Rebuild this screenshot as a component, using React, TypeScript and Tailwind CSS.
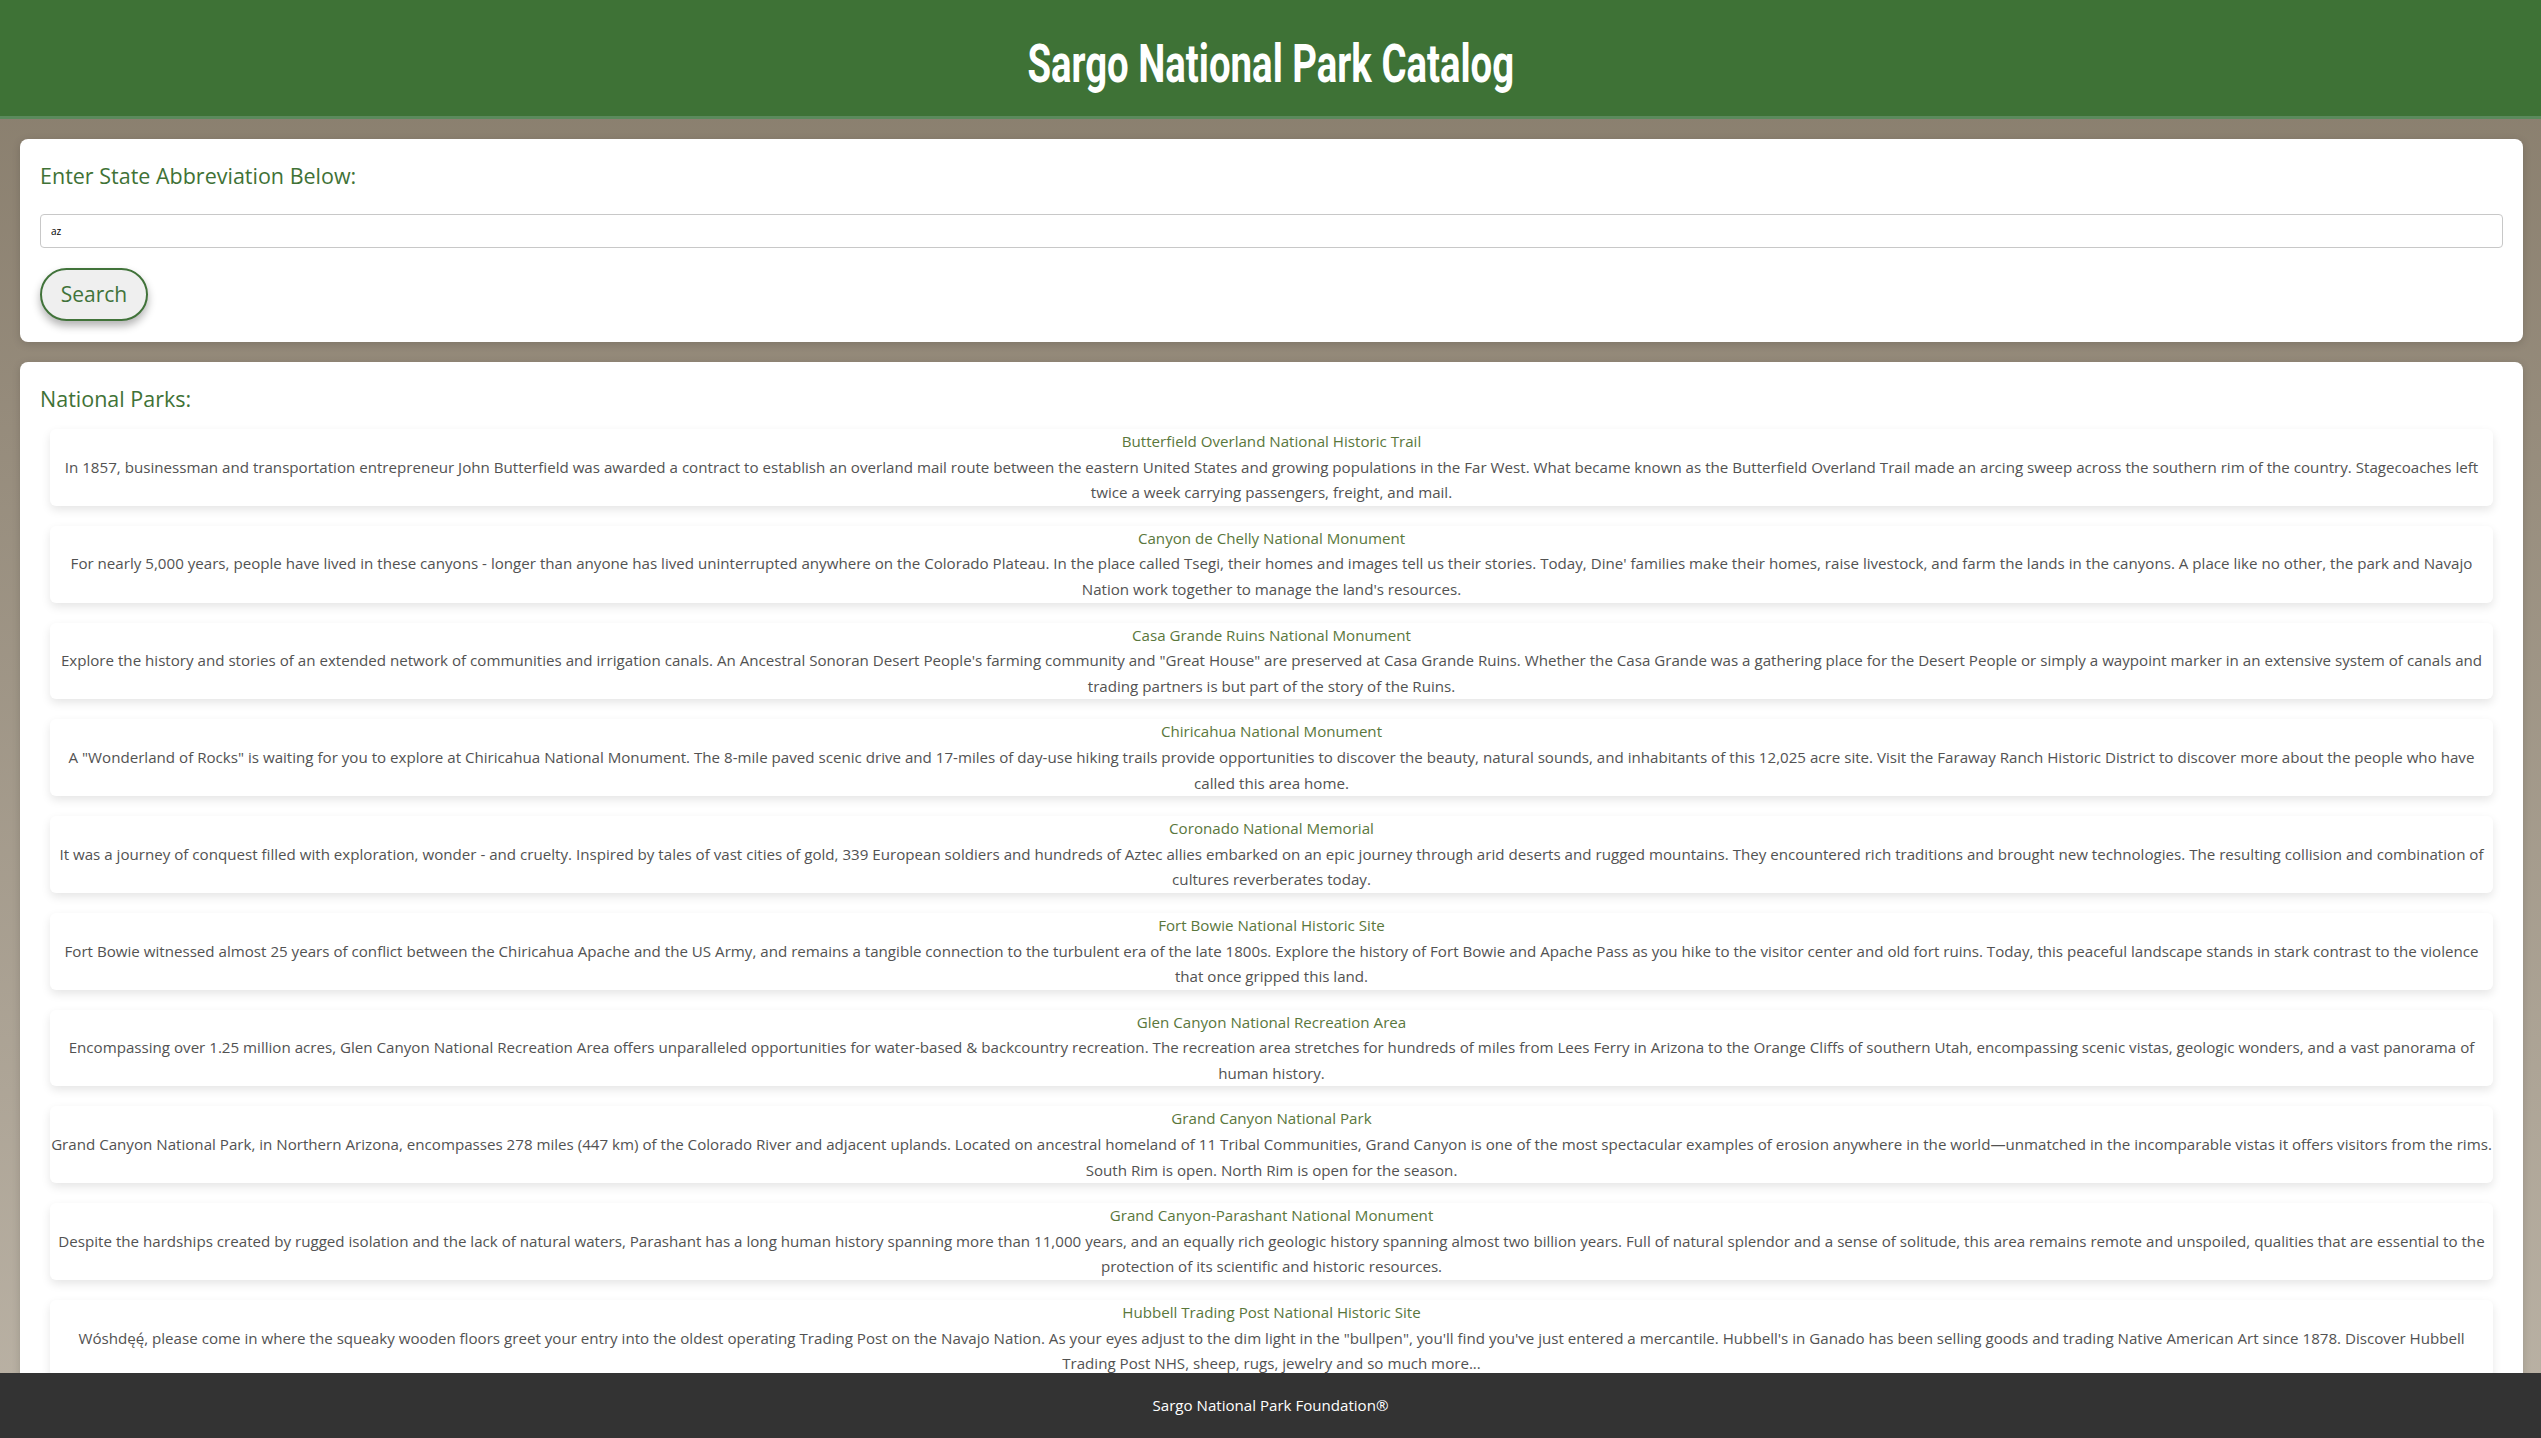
const parks = [
  {
    name: "Butterfield Overland National Historic Trail",
    description:
      "In 1857, businessman and transportation entrepreneur John Butterfield was awarded a contract to establish an overland mail route between the eastern United States and growing populations in the Far West. What became known as the Butterfield Overland Trail made an arcing sweep across the southern rim of the country. Stagecoaches left twice a week carrying passengers, freight, and mail.",
  },
  {
    name: "Canyon de Chelly National Monument",
    description:
      "For nearly 5,000 years, people have lived in these canyons - longer than anyone has lived uninterrupted anywhere on the Colorado Plateau. In the place called Tsegi, their homes and images tell us their stories. Today, Dine' families make their homes, raise livestock, and farm the lands in the canyons. A place like no other, the park and Navajo Nation work together to manage the land's resources.",
  },
  {
    name: "Casa Grande Ruins National Monument",
    description:
      'Explore the history and stories of an extended network of communities and irrigation canals. An Ancestral Sonoran Desert People\'s farming community and "Great House" are preserved at Casa Grande Ruins. Whether the Casa Grande was a gathering place for the Desert People or simply a waypoint marker in an extensive system of canals and trading partners is but part of the story of the Ruins.',
  },
  {
    name: "Chiricahua National Monument",
    description:
      'A "Wonderland of Rocks" is waiting for you to explore at Chiricahua National Monument. The 8-mile paved scenic drive and 17-miles of day-use hiking trails provide opportunities to discover the beauty, natural sounds, and inhabitants of this 12,025 acre site. Visit the Faraway Ranch Historic District to discover more about the people who have called this area home.',
  },
  {
    name: "Coronado National Memorial",
    description:
      "It was a journey of conquest filled with exploration, wonder - and cruelty. Inspired by tales of vast cities of gold, 339 European soldiers and hundreds of Aztec allies embarked on an epic journey through arid deserts and rugged mountains. They encountered rich traditions and brought new technologies. The resulting collision and combination of cultures reverberates today.",
  },
  {
    name: "Fort Bowie National Historic Site",
    description:
      "Fort Bowie witnessed almost 25 years of conflict between the Chiricahua Apache and the US Army, and remains a tangible connection to the turbulent era of the late 1800s. Explore the history of Fort Bowie and Apache Pass as you hike to the visitor center and old fort ruins. Today, this peaceful landscape stands in stark contrast to the violence that once gripped this land.",
  },
  {
    name: "Glen Canyon National Recreation Area",
    description:
      "Encompassing over 1.25 million acres, Glen Canyon National Recreation Area offers unparalleled opportunities for water-based & backcountry recreation. The recreation area stretches for hundreds of miles from Lees Ferry in Arizona to the Orange Cliffs of southern Utah, encompassing scenic vistas, geologic wonders, and a vast panorama of human history.",
  },
  {
    name: "Grand Canyon National Park",
    description:
      "Grand Canyon National Park, in Northern Arizona, encompasses 278 miles (447 km) of the Colorado River and adjacent uplands. Located on ancestral homeland of 11 Tribal Communities, Grand Canyon is one of the most spectacular examples of erosion anywhere in the world\u2014unmatched in the incomparable vistas it offers visitors from the rims. South Rim is open. North Rim is open for the season.",
  },
  {
    name: "Grand Canyon-Parashant National Monument",
    description:
      "Despite the hardships created by rugged isolation and the lack of natural waters, Parashant has a long human history spanning more than 11,000 years, and an equally rich geologic history spanning almost two billion years. Full of natural splendor and a sense of solitude, this area remains remote and unspoiled, qualities that are essential to the protection of its scientific and historic resources.",
  },
  {
    name: "Hubbell Trading Post National Historic Site",
    description:
      'W\u00f3shd\u0119\u0119\u0301, please come in where the squeaky wooden floors greet your entry into the oldest operating Trading Post on the Navajo Nation. As your eyes adjust to the dim light in the "bullpen", you\'ll find you\'ve just entered a mercantile. Hubbell\'s in Ganado has been selling goods and trading Native American Art since 1878. Discover Hubbell Trading Post NHS, sheep, rugs, jewelry and so much more...',
  },
];

export default function App() {
  return (
    <div className="min-h-screen bg-gradient-to-b from-[#877c6b] to-[#bcb4a7] pb-[80px] font-['Open_Sans',sans-serif]">
      {/* Header */}
      <header className="flex h-[119px] items-center justify-center border-b-[3px] border-[#5b8a5c] bg-[#3e7236] pt-[12px]">
        <h1 className="inline-block scale-x-[0.71] font-['Roboto',sans-serif] text-[54px] font-bold leading-none text-white">
          Sargo National Park Catalog
        </h1>
      </header>

      {/* Search */}
      <section className="ml-[20px] mr-[18px] mt-[20px] rounded-lg bg-white px-5 pb-[21px] pt-[22px] shadow-[0_2px_8px_rgba(0,0,0,0.15)]">
        <h3 className="text-[21.5px] leading-[30px] text-[#3f7236]">
          Enter State Abbreviation Below:
        </h3>
        <input
          defaultValue="az"
          className="mt-[23px] block h-[34px] w-full rounded-[4px] border border-[#c8c8c8] px-[10px] text-[10px] text-black outline-none"
        />
        <button className="mt-5 h-[53px] w-[108px] rounded-full border-2 border-[#41733a] bg-[#efefef] text-[21px] text-[#41733a] shadow-[0_5px_8px_rgba(0,0,0,0.3)]">
          Search
        </button>
      </section>

      {/* Results */}
      <section className="ml-[20px] mr-[18px] mt-[20px] rounded-lg bg-white px-5 pb-5 pt-[22px] shadow-[0_2px_8px_rgba(0,0,0,0.15)]">
        <h3 className="text-[21.5px] leading-[30px] text-[#3f7236]">
          National Parks:
        </h3>
        <div className="mx-[10px] mt-[15px] flex flex-col gap-5">
          {parks.map((park) => (
            <div
              key={park.name}
              className="rounded-md bg-white text-center shadow-[0_4px_10px_rgba(0,0,0,0.1)]"
            >
              <p className="text-[15.14px] leading-[25.6px] text-[#5a773c]">
                {park.name}
              </p>
              <p className="text-[15.14px] leading-[25.6px] text-[#525252]">
                {park.description}
              </p>
            </div>
          ))}
        </div>
      </section>

      {/* Footer */}
      <footer className="fixed bottom-0 left-0 right-0 flex h-[65px] items-center justify-center bg-[#333333] text-[15.1px] text-white">
        Sargo National Park Foundation®
      </footer>
    </div>
  );
}
